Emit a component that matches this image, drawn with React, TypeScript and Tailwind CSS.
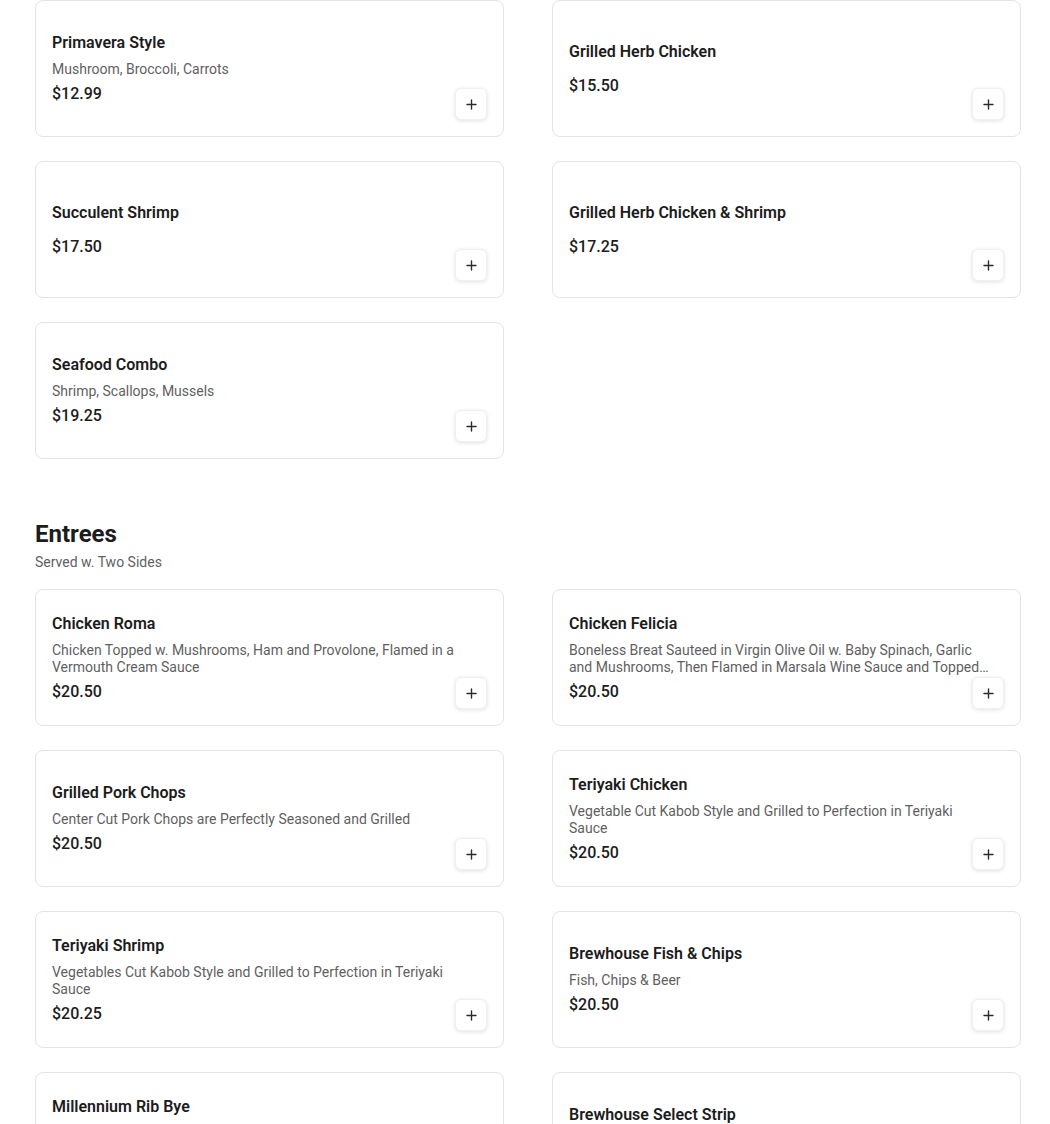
import React from 'react';

type Item = { name: string; desc?: string; price: string };

const topItems: Item[] = [
  { name: 'Primavera Style', desc: 'Mushroom, Broccoli, Carrots', price: '$12.99' },
  { name: 'Grilled Herb Chicken', price: '$15.50' },
  { name: 'Succulent Shrimp', price: '$17.50' },
  { name: 'Grilled Herb Chicken & Shrimp', price: '$17.25' },
  { name: 'Seafood Combo', desc: 'Shrimp, Scallops, Mussels', price: '$19.25' },
];

const entrees: Item[] = [
  {
    name: 'Chicken Roma',
    desc: 'Chicken Topped w. Mushrooms, Ham and Provolone, Flamed in a Vermouth Cream Sauce',
    price: '$20.50',
  },
  {
    name: 'Chicken Felicia',
    desc: 'Boneless Breat Sauteed in Virgin Olive Oil w. Baby Spinach, Garlic and Mushrooms, Then Flamed in Marsala Wine Sauce and Topped w. Provolone Cheese',
    price: '$20.50',
  },
  { name: 'Grilled Pork Chops', desc: 'Center Cut Pork Chops are Perfectly Seasoned and Grilled', price: '$20.50' },
  {
    name: 'Teriyaki Chicken',
    desc: 'Vegetable Cut Kabob Style and Grilled to Perfection in Teriyaki Sauce',
    price: '$20.50',
  },
  {
    name: 'Teriyaki Shrimp',
    desc: 'Vegetables Cut Kabob Style and Grilled to Perfection in Teriyaki Sauce',
    price: '$20.25',
  },
  { name: 'Brewhouse Fish & Chips', desc: 'Fish, Chips & Beer', price: '$20.50' },
  {
    name: 'Millennium Rib Bye',
    desc: 'USDA Choice Ribeye Steak Seasoned and Grilled to Perfection, Topped w. Sauteed Mushrooms and Onions',
    price: '$24.50',
  },
  { name: 'Brewhouse Select Strip', desc: 'USDA Choice New York Strip', price: '$24.50' },
];

function PlusIcon() {
  return (
    <svg width="11" height="11" viewBox="0 0 11 11" fill="none">
      <path d="M5.5 1v9M1 5.5h9" stroke="#2b2b2b" strokeWidth="1.4" strokeLinecap="round" />
    </svg>
  );
}

function MenuCard({ item }: { item: Item }) {
  return (
    <div className="relative flex h-[137px] flex-col justify-center rounded-lg border border-[#e4e4e4] bg-white px-4">
      <div className="flex flex-col pr-[14px]">
        <h3 className="text-base font-semibold leading-6 text-[#1c1c1c]">{item.name}</h3>
        <p className="mt-[6px] line-clamp-2 text-sm leading-[17px] text-[#5f5f5f]">{item.desc}</p>
        <span className="mt-1 text-base font-medium leading-6 text-[#1c1c1c]">{item.price}</span>
      </div>
      <button className="absolute bottom-4 right-4 flex h-8 w-8 items-center justify-center rounded-md border border-[#f0f0f0] bg-white shadow-[0_1px_4px_rgba(0,0,0,0.12)]">
        <PlusIcon />
      </button>
    </div>
  );
}

export default function App() {
  return (
    <main className="min-h-screen bg-white pl-[35px] pr-[29px] font-['Roboto',sans-serif]">
      <div className="grid grid-cols-2 gap-x-12 gap-y-6">
        {topItems.map((it) => (
          <MenuCard key={it.name} item={it} />
        ))}
      </div>

      <section className="mt-[59px]">
        <h2 className="text-2xl font-bold leading-8 text-[#1c1c1c]">Entrees</h2>
        <p className="mt-0.5 text-sm leading-5 text-[#5f5f5f]">Served w. Two Sides</p>
        <div className="mt-[17px] grid grid-cols-2 gap-x-12 gap-y-6">
          {entrees.map((it) => (
            <MenuCard key={it.name} item={it} />
          ))}
        </div>
      </section>
    </main>
  );
}
